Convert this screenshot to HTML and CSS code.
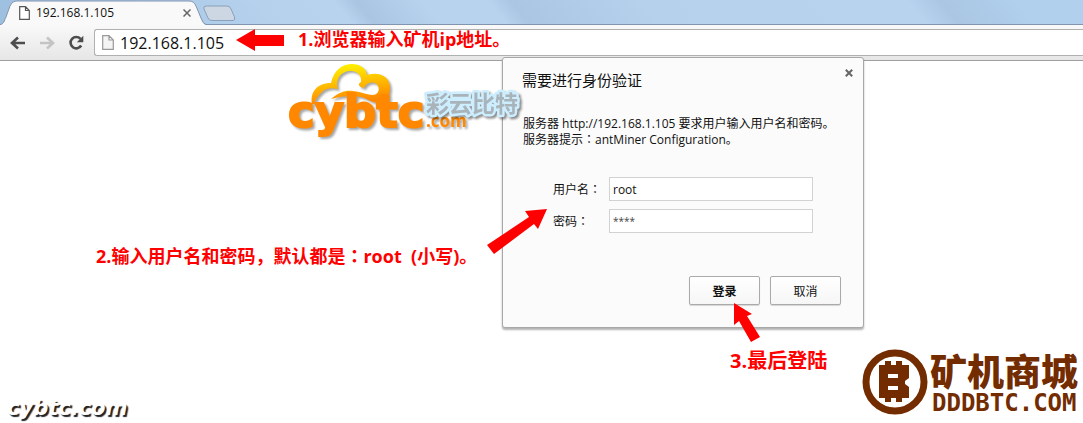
FILE: index.html
```html
<!DOCTYPE html>
<html lang="zh-CN">
<head>
    <meta charset="UTF-8">
    <meta name="viewport" content="width=device-width, initial-scale=1.0">
    <title>192.168.1.105</title>
    <link rel="stylesheet" href="styles.css">
</head>
<body>
    <header>
        <div class="tabs">
            <div class="tab">
                <svg class="tab-shape" width="206" height="25" viewBox="0 0 206 25">
                    <path d="M0 25C4 24 4 21 6 17L10 6Q12 1 16 1H189Q194 1 196 6L201 18Q203 24 206 25Z" fill="#f9f9f9" />
                    <path d="M0 24.500C4 24 4 21 6 17L10 6Q12 1 16 1H189Q194 1 196 6L201 18Q203 24 206 24.500" fill="none" stroke="#8295af" />
                </svg>
                <svg class="file" width="11" height="14" viewBox="0 0 11 14">
                    <path d="M.7.7H6.500L10.300 4.500V13.300H.7ZM6.500.7V4.500H10.300" fill="#fff" stroke="#555" stroke-width="1.200" />
                </svg>
                <span class="tab-title">192.168.1.105</span>
                <button class="icon-btn" aria-label="关闭标签页">
                    <svg width="8" height="8" viewBox="0 0 8 8"><path d="M.5.5L7.500 7.500M7.500.5L.5 7.500" stroke="#666" stroke-width="1.500" /></svg>
                </button>
            </div>
            <button class="new-tab" aria-label="新标签页">
                <svg width="34" height="17" viewBox="0 0 34 17">
                    <path d="M3 1H24Q27 1 28 4L31.500 12Q32.500 15.500 30 15.500H9Q6 15.500 5 13L1 4Q0 1 3 1Z" fill="#cdd7e3" stroke="#8ba0bb" />
                </svg>
            </button>
        </div>
        <div class="toolbar">
            <button class="icon-btn" aria-label="后退">
                <svg width="16" height="14" viewBox="0 0 16 14"><path d="M15 7H3M8 1.500L2 7L8 12.500" fill="none" stroke="#4d4d4d" stroke-width="2.600" /></svg>
            </button>
            <button class="icon-btn" aria-label="前进">
                <svg width="16" height="14" viewBox="0 0 16 14"><path d="M1 7H13M8 1.500L14 7L8 12.500" fill="none" stroke="#c4c4c4" stroke-width="2.600" /></svg>
            </button>
            <button class="icon-btn" aria-label="刷新">
                <svg width="16" height="16" viewBox="0 0 16 16">
                    <path d="M12.500 3.800A5.700 5.700 0 1 0 13.200 10.500" fill="none" stroke="#4d4d4d" stroke-width="2.600" />
                    <path d="M15.300.8V7.200H8.800Z" fill="#4d4d4d" />
                </svg>
            </button>
            <div class="address">
                <svg width="12" height="15" viewBox="0 0 12 15">
                    <path d="M.7.7H7L11.300 5V14.300H.7ZM7 .7V5H11.300" fill="#f4f4f4" stroke="#999" stroke-width="1.200" />
                </svg>
                <input type="text" value="192.168.1.105" aria-label="地址">
            </div>
        </div>
    </header>

    <form class="dialog">
        <div class="dialog-head">
            <h1>需要进行身份验证</h1>
            <button type="button" class="icon-btn" aria-label="关闭">
                <svg width="8" height="8" viewBox="0 0 8 8"><path d="M.8.8L7.200 7.200M7.200.8L.8 7.200" stroke="#666" stroke-width="2" /></svg>
            </button>
        </div>
        <p>服务器 http://192.168.1.105 要求用户输入用户名和密码。<br>服务器提示<span class="colon" lang="zh-TW">：</span>antMiner Configuration。</p>
        <div class="fields">
            <label for="user">用户名<span class="colon" lang="zh-TW">：</span></label>
            <input type="text" id="user" value="root">
            <label for="pass">密码<span class="colon" lang="zh-TW">：</span></label>
            <input type="text" id="pass" class="pass" value="****">
        </div>
        <div class="buttons">
            <button type="button" class="btn login">登录</button>
            <button type="button" class="btn">取消</button>
        </div>
    </form>

    <!-- cybtc logo -->
    <svg class="logo" width="240" height="78" viewBox="0 0 240 78">
        <defs>
            <linearGradient id="cloud" x1="0.45" y1="0" x2="0.65" y2="1">
                <stop offset="0" stop-color="#fff200" />
                <stop offset="0.4" stop-color="#ffc400" />
                <stop offset="0.9" stop-color="#ff8800" />
            </linearGradient>
        </defs>
        <g class="logo-orange">
            <path d="M24 40C22 29 28 19 43 19C46 6 54 0 64 0C72 0 78 4 79 11C92 7 102 13 102 24C102 33 97 39 91 39C84 39 80 35 73 33C64 31 54 32 43 35C51 28 58 26 65 27C74 28 80 31 84 31C90 31 92 26 90 22C88 17 79 17 76 24C71 23 69 20 73 18C74 12 70 7 63 7C53 7 47 15 50 25C38 22 31 28 26 40Z" fill="url(#cloud)" />
            <text x="0" y="63" class="logo-name">cybtc</text>
            <text x="138" y="63" class="logo-com">.com</text>
        </g>
        <text x="138" y="48" class="logo-cn">彩云比特</text>
    </svg>

    <!-- steps -->
    <div class="step step-one">
        <svg width="50" height="24" viewBox="0 0 50 24"><path d="M0 11L19 0V6H48V17H19V22Z" /></svg>
        <span>1.浏览器输入矿机ip地址。</span>
    </div>
    <div class="step step-two">
        <span>2.输入用户名和密码，默认都是<span class="colon" lang="zh-TW">：</span>root&nbsp; (小写)。</span>
        <svg width="60" height="46" viewBox="0 0 60 46"><path d="M60 0L51 20L47 15L7 45L0 36L42 8L38 2Z" /></svg>
    </div>
    <div class="step step-three">
        <svg width="28" height="40" viewBox="0 0 28 40"><path d="M1 0L19 11L14 13L27 34L18 39L6 18L1 22Z" /></svg>
        <span>3.最后登陆</span>
    </div>

    <div class="watermark">cybtc.com</div>

    <div class="shop">
        <svg width="66" height="66" viewBox="0 0 66 66">
            <circle cx="33" cy="33" r="29" fill="#fff" stroke="#732b00" stroke-width="7" />
            <path d="M17 16H23V12H29V16H34V12H40V16H47V29L43 32V35L47 38V49H40V53H34V49H29V53H23V49H17ZM26 25V29H36V25ZM26 37V41H36V37Z" fill="#732b00" fill-rule="evenodd" />
        </svg>
        <div class="shop-text">
            <span class="shop-cn">矿机商城</span>
            <span class="shop-url">DDDBTC.COM</span>
        </div>
    </div>
</body>
</html>
```
FILE: styles.css
```css
*{
    box-sizing: border-box;
}
body{
    margin: 0;
    min-height: 100vh;
    position: relative;
    overflow: hidden;
    background-color: #fff;
    font-family: "Open Sans", "Noto Sans CJK SC", sans-serif;
    font-size: 12px;
    color: #111;
}
button, input{
    font-family: inherit;
    font-size: inherit;
    color: inherit;
}
svg{
    display: block;
    flex: none;
}
.icon-btn, .new-tab{
    padding: 0;
    border: 0;
    background: none;
}
.colon{
    font-family: "Noto Sans CJK TC", sans-serif;
    line-height: 1;
}

/* browser */
.tabs{
    display: flex;
    height: 25px;
    border-bottom: 1px solid #8295af;
    background: linear-gradient(50deg, #9dbfe0 0%, #b5d1ec 25%, #b8d3ee 32%, #a9c5e1 34%, #b8d3ee 40%, #b8d3ee 46%, #aac6e2 48%, #b5d1ec 60%, #b8d3ee 84%, #aac6e2 87%, #b0d0ed 94%);
}
.tab{
    position: relative;
    display: flex;
    align-items: center;
    width: 206px;
    height: 25px;
    padding: 0 15px 0 19px;
}
.tab-shape{
    position: absolute;
    left: 0;
    top: 0;
}
.file, .tab-title, .tab .icon-btn{
    position: relative;
}
.tab-title{
    flex: 1;
    padding-left: 6px;
}
.new-tab{
    align-self: flex-start;
    margin: 5px 0 0 -3px;
}
.toolbar{
    display: flex;
    align-items: center;
    gap: 13px;
    height: 36px;
    padding-left: 10px;
    border-bottom: 1px solid #a0a0a0;
    background: linear-gradient(#f9f9f9, #e6e6e6);
}
.address{
    display: flex;
    align-items: center;
    flex: 1;
    gap: 6px;
    height: 27px;
    margin-left: -3px;
    padding-left: 7px;
    border: 1px solid #b0b0b0;
    border-right: 0;
    border-radius: 3px 0 0 3px;
    background-color: #fff;
}
.address input{
    flex: 1;
    padding: 0;
    border: 0;
    outline: 0;
    font-size: 16px;
    background: none;
}

/* login dialog */
.dialog{
    position: absolute;
    left: 502px;
    top: 57px;
    width: 362px;
    padding: 9px 22px 22px 20px;
    border: 1px solid #a8a8a8;
    border-radius: 3px;
    background-color: #fbfbfb;
    box-shadow: 0 2px 2px rgba(0, 0, 0, 0.3);
}
.dialog-head{
    display: flex;
    justify-content: space-between;
    height: 49px;
}
.dialog h1{
    margin: 2px 0 0 -1px;
    font-size: 15px;
    font-weight: normal;
    line-height: 22px;
}
.dialog-head .icon-btn{
    align-self: flex-start;
    margin: 2px -12px 0 0;
}
.dialog p{
    margin: 0;
    line-height: 16px;
    white-space: nowrap;
}
.fields{
    display: grid;
    grid-template-columns: 56px 204px;
    gap: 8px 0;
    align-items: center;
    margin: 29px 0 43px 30px;
}
.fields input{
    height: 24px;
    padding: 0 3px;
    border: 1px solid #d2d2d2;
    background-color: #fff;
}
.fields .pass{
    font-size: 10px;
    color: #444;
}
.buttons{
    display: flex;
    justify-content: flex-end;
    gap: 10px;
}
.btn{
    width: 71px;
    height: 29px;
    padding: 0;
    border: 1px solid #aaa;
    border-radius: 2px;
    background: linear-gradient(#fff, #f6f6f6);
    box-shadow: 0 1px 1px rgba(0, 0, 0, 0.15);
}
.login{
    font-weight: bold;
}

/* logo */
.logo{
    position: absolute;
    left: 288px;
    top: 64px;
    overflow: visible;
}
.logo-orange{
    fill: #ff8800;
    filter: drop-shadow(2px 2px 1px rgba(0, 0, 0, 0.35));
}
.logo-name{
    font: bold 45px "DejaVu Sans", sans-serif;
    stroke: #ff8800;
    stroke-width: 2px;
}
.logo-com{
    font: bold 17px "Open Sans", sans-serif;
}
.logo-cn{
    font: bold 23px "Noto Sans CJK SC", sans-serif;
    fill: #a9b4ba;
    stroke: #cdeeff;
    stroke-width: 5px;
    stroke-linejoin: round;
    paint-order: stroke;
    filter: drop-shadow(2px 2px 1px rgba(0, 0, 0, 0.45));
}

/* red steps */
.step{
    position: absolute;
    display: flex;
    color: #f00;
    fill: #f00;
    font-size: 18px;
    font-weight: bold;
    line-height: 24px;
    white-space: nowrap;
}
.step-one{
    left: 236px;
    top: 29px;
    gap: 12px;
}
.step-one > span{
    line-height: 20px;
}
.step-two{
    left: 96px;
    top: 209px;
    align-items: flex-end;
}
.step-two > span{
    width: 391px;
    margin-bottom: -13px;
}
.step-three{
    left: 730px;
    top: 303px;
    flex-direction: column;
    gap: 6px;
    font-size: 20px;
}
.step-three svg{
    margin-left: 3px;
}

.watermark{
    position: absolute;
    left: 7px;
    bottom: 3px;
    font: italic bold 21px/24px "DejaVu Sans", sans-serif;
    color: #fff;
    text-shadow: 2px 2px 1px #222;
}

/* shop logo */
.shop{
    position: absolute;
    right: 5px;
    bottom: 8px;
    display: flex;
    gap: 2px;
    color: #732b00;
}
.shop-text{
    display: flex;
    flex-direction: column;
}
.shop-cn{
    font: 900 37px/42px "Noto Sans CJK SC", sans-serif;
}
.shop-url{
    padding-left: 2px;
    font: bold 24px/24px "DejaVu Sans Mono", monospace;
}
```
